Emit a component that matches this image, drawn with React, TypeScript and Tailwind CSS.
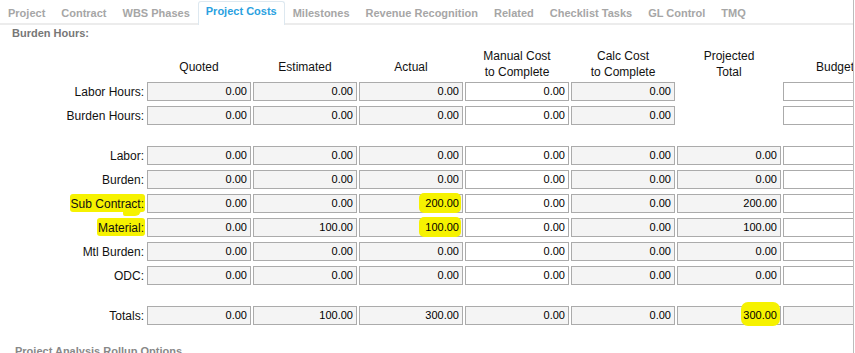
import React from 'react';

type Row = {
    label: string;
    values: (string | null)[];
    hlLabel?: boolean;
    hlCol?: number;
    totals?: boolean;
};

const tabs = ['Project', 'Contract', 'WBS Phases', 'Project Costs', 'Milestones', 'Revenue Recognition', 'Related', 'Checklist Tasks', 'GL Control', 'TMQ'];

const headers: string[][] = [['Quoted'], ['Estimated'], ['Actual'], ['Manual Cost', 'to Complete'], ['Calc Cost', 'to Complete'], ['Projected', 'Total'], ['Budget']];

// columns that take input (white boxes)
const editable = [3, 6];

const hourRows: Row[] = [
    { label: 'Labor Hours', values: ['0.00', '0.00', '0.00', '0.00', '0.00', null, ''] },
    { label: 'Burden Hours', values: ['0.00', '0.00', '0.00', '0.00', '0.00', null, ''] },
];

const costRows: Row[] = [
    { label: 'Labor', values: ['0.00', '0.00', '0.00', '0.00', '0.00', '0.00', ''] },
    { label: 'Burden', values: ['0.00', '0.00', '0.00', '0.00', '0.00', '0.00', ''] },
    { label: 'Sub Contract', values: ['0.00', '0.00', '200.00', '0.00', '0.00', '200.00', ''], hlLabel: true, hlCol: 2 },
    { label: 'Material', values: ['0.00', '100.00', '100.00', '0.00', '0.00', '100.00', ''], hlLabel: true, hlCol: 2 },
    { label: 'Mtl Burden', values: ['0.00', '0.00', '0.00', '0.00', '0.00', '0.00', ''] },
    { label: 'ODC', values: ['0.00', '0.00', '0.00', '0.00', '0.00', '0.00', ''] },
];

const totalRow: Row = { label: 'Totals', values: ['0.00', '100.00', '300.00', '0.00', '0.00', '300.00', ''], hlCol: 5, totals: true };

const Box: React.FC<{ value: string | null; white: boolean; highlight?: 'actual' | 'total' }> = ({ value, white, highlight }) => {
    if (value === null) return <div className="h-[19px] w-[104px] shrink-0" />;
    return (
        <div className={`relative flex h-[19px] w-[104px] shrink-0 items-center justify-end border border-[#ababab] pr-[3px] text-[11px] text-black ${white ? 'bg-white' : 'bg-[#f4f4f4]'}`}>
            {highlight === 'actual' && <span className="absolute right-[1px] top-[-2px] h-[20px] w-[42px] rounded-[5px] bg-[#f6f200]" />}
            {highlight === 'total' && <span className="absolute right-0 top-[-5px] h-[24px] w-[39px] rounded-[7px] bg-[#f6f200]" />}
            <span className="relative">{value}</span>
        </div>
    );
};

const CostRow: React.FC<{ row: Row }> = ({ row }) => (
    <div className="flex gap-[2px]">
        <div className="flex h-[19px] w-[145px] shrink-0 items-center justify-end pr-[1px] text-[12px] text-[#111]">
            <span className="relative">
                {row.hlLabel && (
                    <>
                        <span className="absolute -left-[1px] -right-[1px] top-[-1px] bottom-[1px] rounded-[3px] bg-[#f6f200]" />
                        {row.label === 'Sub Contract' && <span className="absolute right-[3px] top-[12px] h-[9px] w-[18px] rounded-br-[6px] rounded-bl-[2px] bg-[#f6f200]" />}
                    </>
                )}
                <span className="relative">{row.label}:</span>
            </span>
        </div>
        {row.values.map((v, i) => (
            <Box
                key={i}
                value={v}
                white={!row.totals && editable.includes(i)}
                highlight={row.hlCol === i ? (row.totals ? 'total' : 'actual') : undefined}
            />
        ))}
    </div>
);

export default function App() {
    return (
        <div className="h-[353px] w-[854px] overflow-hidden border-r border-[#bcbcbc] bg-white font-['Liberation_Sans',Arial,sans-serif]">
            {/* Tabs */}
            <div className="flex h-[25px] border-b-2 border-[#ececec] text-[11px] font-bold leading-[14px]">
                {tabs.map((t) =>
                    t === 'Project Costs' ? (
                        <div key={t} className="mt-px -mb-[2px] rounded-t-[3px] border border-b-0 border-[#dde8f0] bg-white px-[7px] pt-[2px] text-[#2aa1df]">{t}</div>
                    ) : (
                        <div key={t} className="px-2 pt-[6px] text-[#a6a6a6]">{t}</div>
                    )
                )}
            </div>

            <div className="ml-[12px] pt-[1px] text-[11px] font-bold leading-[14px] text-[#777]">Burden Hours:</div>

            {/* Column headers */}
            <div className="mt-[8px] flex h-[32px] gap-[2px] text-[12px] leading-[16px] text-[#111]">
                <div className="w-[145px] shrink-0" />
                {headers.map((h, i) => (
                    <div key={i} className={`flex w-[104px] shrink-0 flex-col items-center justify-end text-center ${h.length === 1 ? 'pb-[5px]' : ''}`}>
                        {h.map((line) => <span key={line} className="whitespace-nowrap">{line}</span>)}
                    </div>
                ))}
            </div>

            <div className="mt-[2px] flex flex-col gap-[5px]">
                {hourRows.map((r) => <CostRow key={r.label} row={r} />)}
                <div className="h-[11px]" />
                {costRows.map((r) => <CostRow key={r.label} row={r} />)}
                <div className="h-[11px]" />
                <CostRow row={totalRow} />
            </div>

            <div className="ml-[15px] mt-[19px] text-[11px] font-bold leading-[14px] text-[#888]">Project Analysis Rollup Options</div>
        </div>
    );
}
